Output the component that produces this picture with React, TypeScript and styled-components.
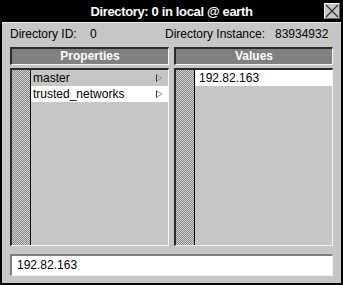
import React from "react";
import styled, { createGlobalStyle } from "styled-components";

const Global = createGlobalStyle`
  html, body { margin: 0; padding: 0; background: #c6c6c6; }
  * { box-sizing: border-box; }
`;

const Window = styled.div`
  width: 343px;
  height: 285px;
  border: 2px solid #000;
  background: #c6c6c6;
  display: flex;
  flex-direction: column;
  font-family: "Liberation Sans", Arial, sans-serif;
  color: #000;
`;

const TitleBar = styled.div`
  height: 20px;
  background: #000;
  display: grid;
  grid-template-columns: 1fr auto 1fr;
  align-items: center;
`;

const TitleText = styled.div`
  grid-column: 2;
  color: #fff;
  font-weight: bold;
  font-size: 13px;
  letter-spacing: -0.35px;
  line-height: 20px;
  white-space: nowrap;
`;

const CloseButton = styled.div`
  grid-column: 3;
  justify-self: end;
  align-self: start;
  margin-top: 1px;
  margin-right: 1px;
  width: 16px;
  height: 16px;
  background: #c6c6c6;
  border-width: 1px;
  border-style: solid;
  border-color: #f2f2f2 #606060 #606060 #f2f2f2;
  display: flex;
  align-items: center;
  justify-content: center;
`;

const Content = styled.div`
  flex: 1;
  border-top: 1px solid #e8e8e8;
  padding: 4px 8px 7px 8px;
  display: flex;
  flex-direction: column;
  min-height: 0;
`;

const InfoRow = styled.div`
  height: 14px;
  font-size: 12px;
  line-height: 14px;
  display: flex;
  white-space: pre;
`;

const InfoLabel = styled.span<{ $w: number }>`
  display: inline-block;
  width: ${(p) => p.$w}px;
`;

const Columns = styled.div`
  margin-top: 6px;
  flex: 1;
  min-height: 0;
  display: grid;
  grid-template-columns: 1fr 1fr;
  column-gap: 5px;
`;

const Column = styled.div`
  display: flex;
  flex-direction: column;
  min-height: 0;
`;

const HeaderBar = styled.div`
  height: 18px;
  background: #808080;
  border-width: 2px 1px 1px 2px;
  border-style: solid;
  border-color: #2a2a2a #f4f4f4 #f4f4f4 #2a2a2a;
  color: #fff;
  font-weight: bold;
  font-size: 12px;
  line-height: 14px;
  text-align: center;
`;

const ListBox = styled.div`
  margin-top: 3px;
  flex: 1;
  display: flex;
  border-width: 2px 1px 1px 2px;
  border-style: solid;
  border-color: #2a2a2a #f4f4f4 #f4f4f4 #2a2a2a;
  background: #c6c6c6;
`;

const Gutter = styled.div<{ $w: number }>`
  width: ${(p) => p.$w}px;
  flex: none;
  background-image: repeating-conic-gradient(#8a8a8a 0 25%, #cfcfcf 0 50%);
  background-size: 2px 2px;
  border-right: 1px solid #000;
`;

const Rows = styled.div`
  flex: 1;
  display: flex;
  flex-direction: column;
  min-width: 0;
`;

const Row = styled.div<{ $selected?: boolean; $pad: number }>`
  height: 16px;
  display: flex;
  align-items: center;
  justify-content: space-between;
  padding: 0 5px 0 ${(p) => p.$pad}px;
  background: ${(p) => (p.$selected ? "#ffffff" : "transparent")};
  font-size: 12px;
  line-height: 16px;
  white-space: nowrap;
`;

const InputBox = styled.div`
  margin-top: 8px;
  height: 22px;
  background: #fff;
  border-width: 2px 1px 1px 2px;
  border-style: solid;
  border-color: #7c7c7c #f4f4f4 #f4f4f4 #7c7c7c;
  font-size: 12px;
  line-height: 18px;
  padding-left: 5px;
`;

const Arrow = () => (
  <svg width="7" height="8" viewBox="0 0 7 8">
    <path d="M1 1 L6 4 L1 7" fill="none" stroke="#9a9a9a" strokeWidth="1" />
    <line x1="0.5" y1="0.5" x2="0.5" y2="7.5" stroke="#333" strokeWidth="1" />
  </svg>
);

const CloseIcon = () => (
  <svg width="14" height="14" viewBox="0 0 14 14">
    <path d="M1 1 L13 13 M13 1 L1 13" stroke="#303030" strokeWidth="1.3" fill="none" />
  </svg>
);

export default function App() {
  return (
    <>
      <Global />
      <Window>
        <TitleBar>
          <TitleText>Directory: 0 in local @ earth</TitleText>
          <CloseButton>
            <CloseIcon />
          </CloseButton>
        </TitleBar>
        <Content>
          <InfoRow>
            <InfoLabel $w={80}>Directory ID:</InfoLabel>
            <InfoLabel $w={75}>0</InfoLabel>
            <InfoLabel $w={110}>Directory Instance:</InfoLabel>
            <span>83934932</span>
          </InfoRow>
          <Columns>
            <Column>
              <HeaderBar>Properties</HeaderBar>
              <ListBox>
                <Gutter $w={19} />
                <Rows>
                  <Row $pad={2}>
                    <span>master</span>
                    <Arrow />
                  </Row>
                  <Row $pad={2} $selected>
                    <span>trusted_networks</span>
                    <Arrow />
                  </Row>
                </Rows>
              </ListBox>
            </Column>
            <Column>
              <HeaderBar>Values</HeaderBar>
              <ListBox>
                <Gutter $w={19} />
                <Rows>
                  <Row $pad={4} $selected>
                    <span>192.82.163</span>
                  </Row>
                </Rows>
              </ListBox>
            </Column>
          </Columns>
          <InputBox>192.82.163</InputBox>
        </Content>
      </Window>
    </>
  );
}
